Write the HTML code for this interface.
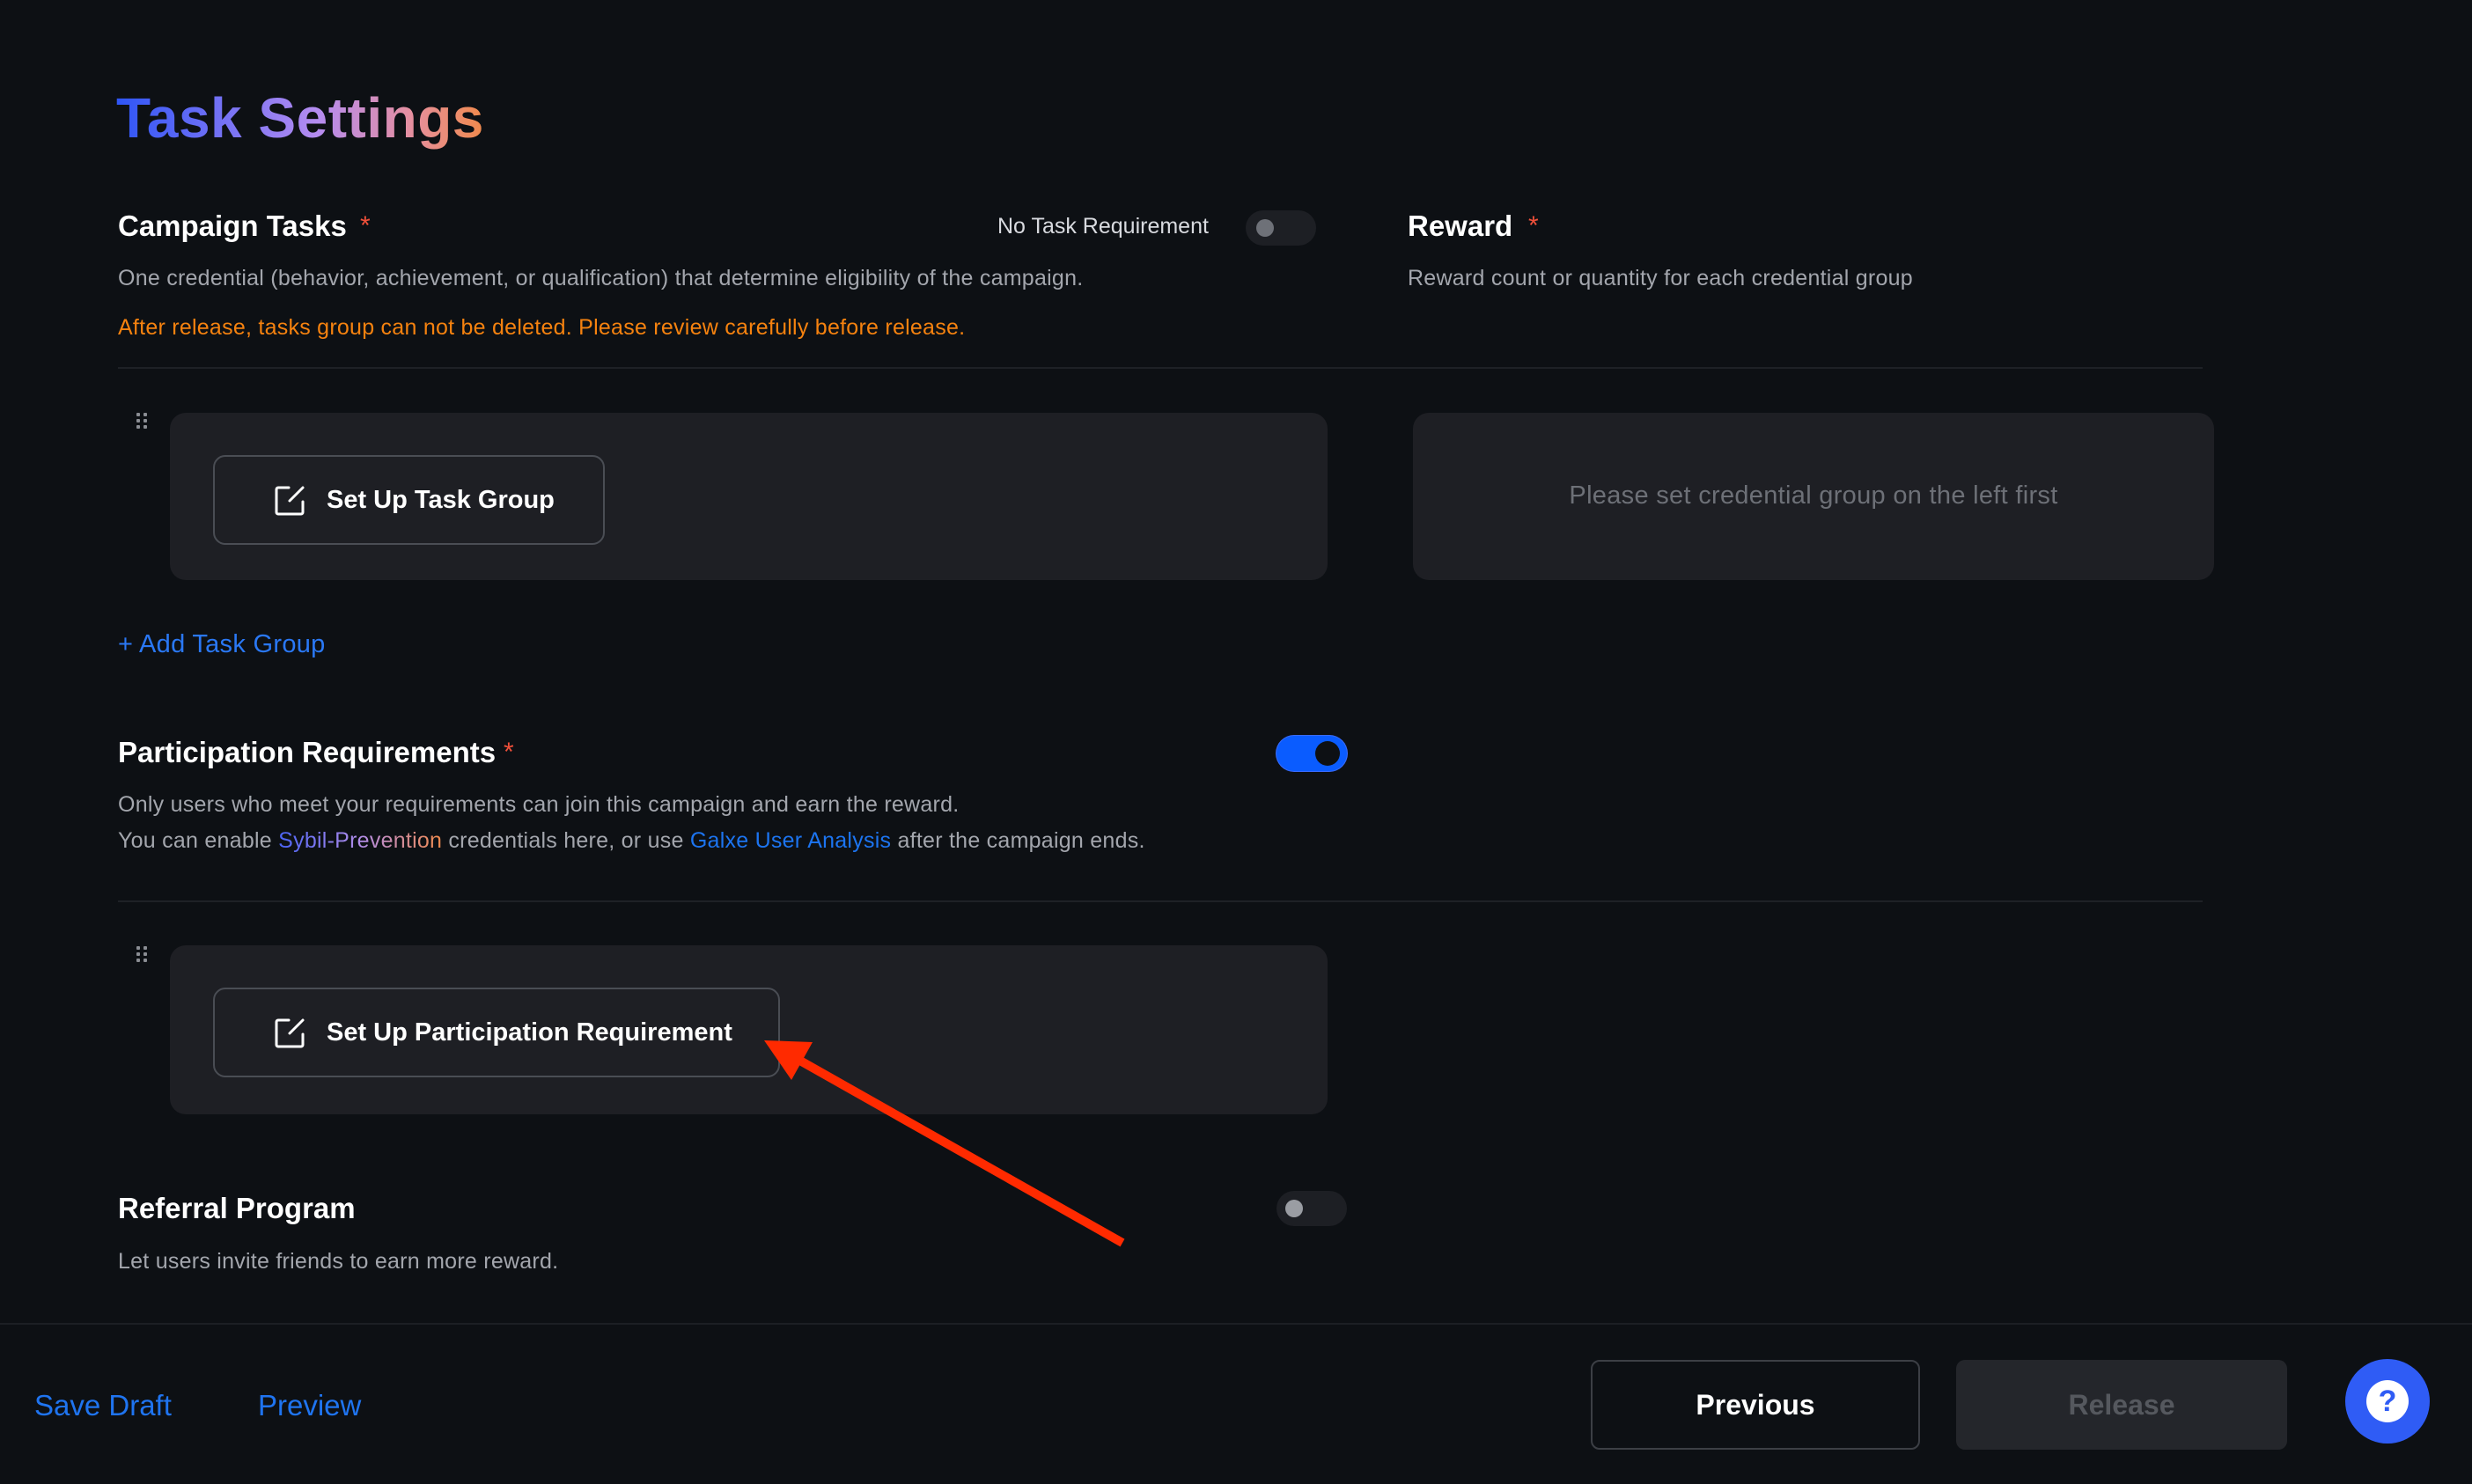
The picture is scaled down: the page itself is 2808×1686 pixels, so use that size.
<!DOCTYPE html>
<html><head><meta charset="utf-8"><style>
*{margin:0;padding:0;box-sizing:border-box}
body{width:2808px;height:1686px;background:#0d1014;font-family:"Liberation Sans",sans-serif;position:relative;overflow:hidden;color:#fff}
.a{position:absolute;white-space:nowrap}
.title{left:132px;top:97px;font-size:64px;font-weight:bold;letter-spacing:0.5px;background:linear-gradient(90deg,#2e55f6 0%,#6b6ef5 25%,#b58cf0 55%,#e58fa0 80%,#f08a4c 100%);-webkit-background-clip:text;color:transparent}
.h{font-size:33px;font-weight:bold;color:#fff}
.star{color:#f0503a;font-size:30px}
.d{font-size:25px;color:#a3a6ad;letter-spacing:0.25px}
.line{position:absolute;left:134px;width:2368px;height:2px;background:#1e2126}
.card{position:absolute;background:#1e1f24;border-radius:18px}
.btn{position:absolute;border:2px solid #4a4d54;border-radius:14px;display:flex;align-items:center;font-size:29px;font-weight:bold;color:#fff}
.dots{position:absolute;width:14px;height:18px}
.dots i{position:absolute;width:4px;height:4px;background:#8a8d93;border-radius:1px}
.tg{position:absolute;width:80px;height:40px;border-radius:20px;background:#1d1f24}
.tg i{position:absolute;top:10px;left:12px;width:20px;height:20px;border-radius:50%;background:#6e7178}
</style></head><body>
<div class="a title">Task Settings</div>

<div class="a h" style="left:134px;top:238px">Campaign Tasks</div>
<div class="a star" style="left:409px;top:240px">*</div>
<div class="a" style="left:1133px;top:243px;font-size:25px;color:#d8dadf">No Task Requirement</div>
<div class="tg" style="left:1415px;top:239px"><i></i></div>
<div class="a h" style="left:1599px;top:238px">Reward</div>
<div class="a star" style="left:1736px;top:240px">*</div>
<div class="a d" style="left:134px;top:302px">One credential (behavior, achievement, or qualification) that determine eligibility of the campaign.</div>
<div class="a d" style="left:1599px;top:302px">Reward count or quantity for each credential group</div>
<div class="a" style="left:134px;top:358px;font-size:25px;color:#f5820f;letter-spacing:0.25px">After release, tasks group can not be deleted. Please review carefully before release.</div>
<div class="line" style="top:417px"></div>

<div class="dots" style="left:155px;top:469px"><i style="left:0;top:0"></i><i style="left:8px;top:0"></i><i style="left:0;top:7px"></i><i style="left:8px;top:7px"></i><i style="left:0;top:14px"></i><i style="left:8px;top:14px"></i></div>
<div class="card" style="left:193px;top:469px;width:1315px;height:190px"></div>
<div class="btn" style="left:242px;top:517px;width:445px;height:102px">
<svg style="margin-left:66px" width="38" height="38" viewBox="0 0 38 38" fill="none" stroke="#fff" stroke-width="3" stroke-linecap="round"><path d="M18 5H6a2 2 0 0 0-2 2v26a2 2 0 0 0 2 2h26a2 2 0 0 0 2-2V21M19 20L34 5"/></svg>
<span style="margin-left:23px">Set Up Task Group</span></div>
<div class="card" style="left:1605px;top:469px;width:910px;height:190px"></div>
<div class="a" style="left:1605px;top:547px;width:910px;text-align:center;font-size:29px;color:#6d7077;letter-spacing:0.3px">Please set credential group on the left first</div>

<div class="a" style="left:134px;top:716px;font-size:29px;color:#2a78f5;letter-spacing:0.3px">+ Add Task Group</div>

<div class="a h" style="left:134px;top:836px">Participation Requirements</div>
<div class="a star" style="left:572px;top:838px">*</div>
<div class="tg" style="left:1450px;top:836px;background:#0a5cff;box-shadow:0 0 0 1px #3a6cff"><i style="left:44px;top:6px;width:28px;height:28px;background:#0d1014"></i></div>
<div class="a d" style="left:134px;top:900px">Only users who meet your requirements can join this campaign and earn the reward.</div>
<div class="a d" style="left:134px;top:941px">You can enable <span style="background:linear-gradient(90deg,#4a63f5,#b08ce8,#f08a4c);-webkit-background-clip:text;color:transparent">Sybil-Prevention</span> credentials here, or use <span style="color:#1c74f0">Galxe User Analysis</span> after the campaign ends.</div>
<div class="line" style="top:1023px"></div>

<div class="dots" style="left:155px;top:1075px"><i style="left:0;top:0"></i><i style="left:8px;top:0"></i><i style="left:0;top:7px"></i><i style="left:8px;top:7px"></i><i style="left:0;top:14px"></i><i style="left:8px;top:14px"></i></div>
<div class="card" style="left:193px;top:1074px;width:1315px;height:192px"></div>
<div class="btn" style="left:242px;top:1122px;width:644px;height:102px">
<svg style="margin-left:66px" width="38" height="38" viewBox="0 0 38 38" fill="none" stroke="#fff" stroke-width="3" stroke-linecap="round"><path d="M18 5H6a2 2 0 0 0-2 2v26a2 2 0 0 0 2 2h26a2 2 0 0 0 2-2V21M19 20L34 5"/></svg>
<span style="margin-left:23px">Set Up Participation Requirement</span></div>

<div class="a h" style="left:134px;top:1354px">Referral Program</div>
<div class="tg" style="left:1450px;top:1353px"><i style="left:10px;top:10px;background:#9a9da3"></i></div>
<div class="a d" style="left:134px;top:1419px">Let users invite friends to earn more reward.</div>

<div style="position:absolute;left:0;top:1503px;width:2808px;height:2px;background:#1c1f24"></div>
<div class="a" style="left:39px;top:1578px;font-size:33px;color:#1f74f0">Save Draft</div>
<div class="a" style="left:293px;top:1578px;font-size:33px;color:#1f74f0">Preview</div>
<div style="position:absolute;left:1807px;top:1545px;width:374px;height:102px;border:2px solid #3c3f45;border-radius:10px;display:flex;align-items:center;justify-content:center;font-size:32px;font-weight:bold">Previous</div>
<div style="position:absolute;left:2222px;top:1545px;width:376px;height:102px;background:#24262b;border-radius:10px;display:flex;align-items:center;justify-content:center;font-size:32px;font-weight:bold;color:#55585e">Release</div>
<div style="position:absolute;left:2664px;top:1544px;width:96px;height:96px;border-radius:50%;background:#2f5cf5"></div>
<div style="position:absolute;left:2688px;top:1568px;width:48px;height:48px;border-radius:50%;background:#fff;color:#2f5cf5;font-weight:bold;font-size:34px;text-align:center;line-height:48px">?</div>

<svg style="position:absolute;left:0;top:0" width="2808" height="1686"><line x1="1275" y1="1412" x2="900" y2="1200" stroke="#ff2a00" stroke-width="10"/><polygon points="868,1182 923,1184 899,1227" fill="#ff2a00"/></svg>
</body></html>
